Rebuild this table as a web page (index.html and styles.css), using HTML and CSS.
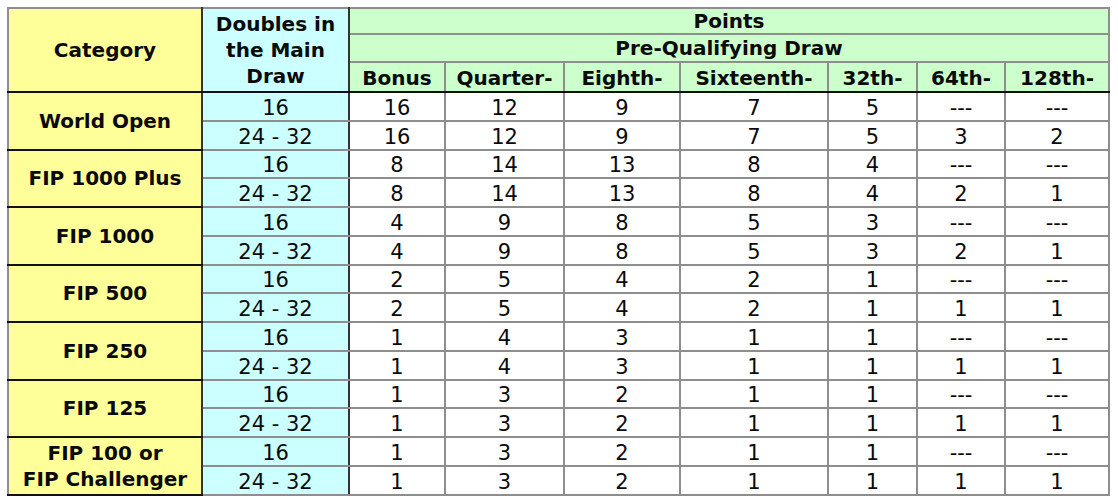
FILE: index.html
```html
<!DOCTYPE html>
<html>
<head>
<meta charset="utf-8">
<link rel="stylesheet" href="styles.css">
</head>
<body>
<table class="pts">
  <colgroup>
    <col class="c-cat"><col class="c-dbl"><col class="c-bonus"><col class="c-q"><col class="c-e"><col class="c-s"><col class="c-32"><col class="c-64"><col class="c-128">
  </colgroup>
  <thead>
    <tr class="h1">
      <th rowspan="3" class="cat">Category</th>
      <th rowspan="3" class="dbl">Doubles in<br>the Main<br>Draw</th>
      <th colspan="7" class="grn">Points</th>
    </tr>
    <tr class="h2">
      <th colspan="7" class="grn">Pre-Qualifying Draw</th>
    </tr>
    <tr class="h3">
      <th class="grn">Bonus</th>
      <th class="grn">Quarter-</th>
      <th class="grn">Eighth-</th>
      <th class="grn">Sixteenth-</th>
      <th class="grn">32th-</th>
      <th class="grn">64th-</th>
      <th class="grn">128th-</th>
    </tr>
  </thead>
  <tbody>
    <tr class="first"><th rowspan="2" class="cat">World Open</th><td class="dbl">16</td><td>16</td><td>12</td><td>9</td><td>7</td><td>5</td><td>---</td><td>---</td></tr>
    <tr><td class="dbl">24 - 32</td><td>16</td><td>12</td><td>9</td><td>7</td><td>5</td><td>3</td><td>2</td></tr>
    <tr class="first"><th rowspan="2" class="cat">FIP 1000 Plus</th><td class="dbl">16</td><td>8</td><td>14</td><td>13</td><td>8</td><td>4</td><td>---</td><td>---</td></tr>
    <tr><td class="dbl">24 - 32</td><td>8</td><td>14</td><td>13</td><td>8</td><td>4</td><td>2</td><td>1</td></tr>
    <tr class="first"><th rowspan="2" class="cat">FIP 1000</th><td class="dbl">16</td><td>4</td><td>9</td><td>8</td><td>5</td><td>3</td><td>---</td><td>---</td></tr>
    <tr><td class="dbl">24 - 32</td><td>4</td><td>9</td><td>8</td><td>5</td><td>3</td><td>2</td><td>1</td></tr>
    <tr class="first"><th rowspan="2" class="cat">FIP 500</th><td class="dbl">16</td><td>2</td><td>5</td><td>4</td><td>2</td><td>1</td><td>---</td><td>---</td></tr>
    <tr><td class="dbl">24 - 32</td><td>2</td><td>5</td><td>4</td><td>2</td><td>1</td><td>1</td><td>1</td></tr>
    <tr class="first"><th rowspan="2" class="cat">FIP 250</th><td class="dbl">16</td><td>1</td><td>4</td><td>3</td><td>1</td><td>1</td><td>---</td><td>---</td></tr>
    <tr><td class="dbl">24 - 32</td><td>1</td><td>4</td><td>3</td><td>1</td><td>1</td><td>1</td><td>1</td></tr>
    <tr class="first"><th rowspan="2" class="cat">FIP 125</th><td class="dbl">16</td><td>1</td><td>3</td><td>2</td><td>1</td><td>1</td><td>---</td><td>---</td></tr>
    <tr><td class="dbl">24 - 32</td><td>1</td><td>3</td><td>2</td><td>1</td><td>1</td><td>1</td><td>1</td></tr>
    <tr class="first"><th rowspan="2" class="cat">FIP 100 or<br>FIP Challenger</th><td class="dbl">16</td><td>1</td><td>3</td><td>2</td><td>1</td><td>1</td><td>---</td><td>---</td></tr>
    <tr><td class="dbl">24 - 32</td><td>1</td><td>3</td><td>2</td><td>1</td><td>1</td><td>1</td><td>1</td></tr>
  </tbody>
</table>
</body>
</html>
```
FILE: styles.css
```css
html, body {
  margin: 0;
  padding: 0;
  background: #ffffff;
}
body {
  padding: 7px 0 0 7px;
  font-family: "DejaVu Sans", Verdana, sans-serif;
  color: #0a0a0a;
}
.pts {
  border-collapse: collapse;
  table-layout: fixed;
  width: 1101px;
  border: 2px solid #111;
}
.c-cat { width: 194px; }
.c-dbl { width: 147px; }
.c-bonus { width: 96px; }
.c-q { width: 119px; }
.c-e { width: 116px; }
.c-s { width: 148px; }
.c-32 { width: 89px; }
.c-64 { width: 88px; }
.c-128 { width: 104px; }

.pts th, .pts td {
  border: 2px solid #8e8e8e;
  padding: 0;
  text-align: center;
  vertical-align: middle;
  overflow: hidden;
  white-space: nowrap;
}
.pts th {
  font-weight: bold;
  font-size: 20px;
}
.pts td {
  font-weight: normal;
  font-size: 21px;
  height: 23.75px;
  padding-top: 3px;
  line-height: 22px;
}
.pts .cat {
  background: #ffff99;
  border-right: 2px solid #333;
  line-height: 26px;
}
.pts .dbl {
  background: #ccffff;
  border-right: 2px solid #333;
}
.pts th.dbl {
  line-height: 26px;
}
.pts .grn {
  background: #ccffcc;
}
.h1 th.grn {
  height: 24px;
  line-height: 22px;
}
.h2 th.grn {
  height: 26px;
  line-height: 22px;
}
.h3 th {
  height: 26px;
  line-height: 22px;
  padding-top: 2px;
}
.pts thead th.cat, .pts thead th.dbl, .h3 th {
  border-bottom: 2px solid #111;
}
.pts tr.first th, .pts tr.first td {
  border-top: 2px solid #111;
}
.pts tbody .cat {
  border-bottom: 2px solid #111;
}
```
